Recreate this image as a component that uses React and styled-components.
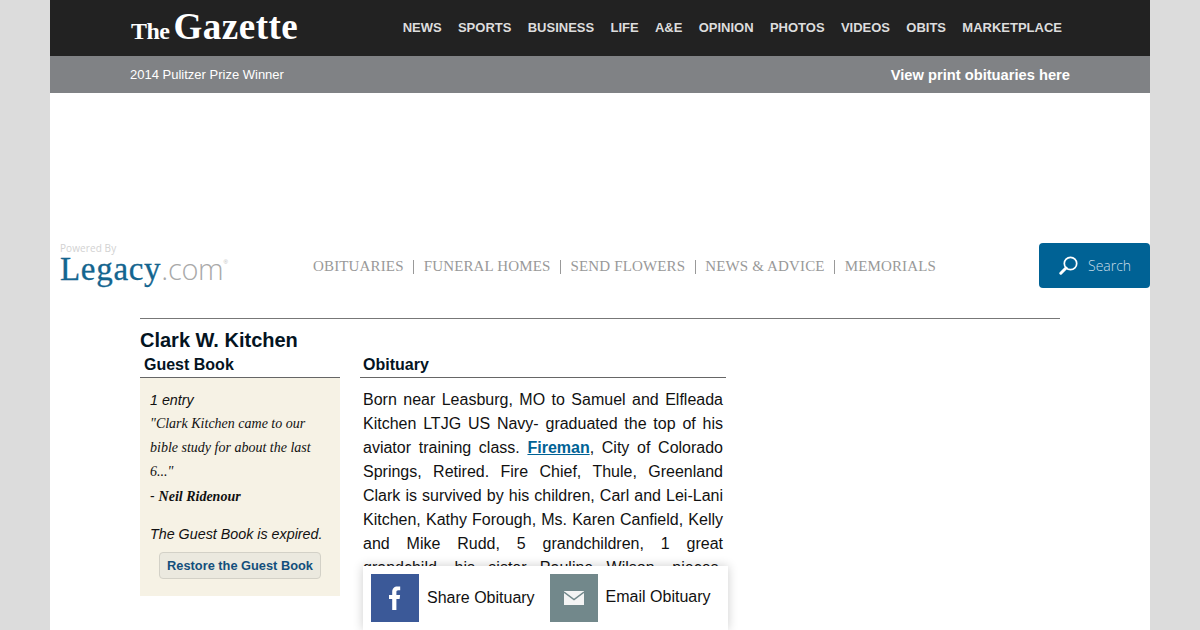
import React from "react";
import styled, { createGlobalStyle } from "styled-components";

const GlobalStyle = createGlobalStyle`
  html, body {
    margin: 0;
    padding: 0;
    height: 630px;
    overflow: hidden;
    background: #dcdcdc;
    font-family: "Liberation Sans", Arial, sans-serif;
  }
`;

const Page = styled.div`
  position: relative;
  width: 1100px;
  height: 630px;
  margin: 0 auto;
  background: #fff;
  overflow: hidden;
`;

const TopBar = styled.div`
  display: flex;
  align-items: center;
  box-sizing: border-box;
  height: 56px;
  padding: 0 88px 2px 81px;
  background: #222;
`;

const Logo = styled.div`
  flex: 1;
  display: flex;
  align-items: baseline;
  gap: 4px;
  color: #fff;
  font-family: "Liberation Serif", serif;
  font-weight: bold;
`;

const LogoThe = styled.span`
  font-size: 24px;
  letter-spacing: -0.5px;
`;

const LogoName = styled.span`
  font-size: 37px;
  line-height: 40px;
  letter-spacing: 0.5px;
`;

const Nav = styled.nav`
  display: flex;
  gap: 16.3px;
`;

const NavLink = styled.a`
  color: #ddd;
  font-size: 13px;
  font-weight: bold;
`;

const SubBar = styled.div`
  display: flex;
  align-items: center;
  justify-content: space-between;
  height: 37px;
  padding: 0 80px;
  background: #808285;
  color: #fff;
`;

const Prize = styled.span`
  font-size: 13px;
`;

const PrintLink = styled.a`
  font-size: 14.7px;
  font-weight: bold;
`;

const AdSpace = styled.div`
  height: 150px;
`;

const LegacyRow = styled.div`
  display: flex;
  align-items: center;
  height: 45px;
`;

const Brand = styled.div`
  width: 263px;
  padding-left: 10px;
  box-sizing: border-box;
  flex: none;
`;

const Powered = styled.div`
  color: #d2d2d2;
  font-family: "Open Sans", sans-serif;
  font-size: 10px;
  line-height: 10px;
  letter-spacing: 0.1px;
`;

const BrandName = styled.div`
  margin: -2px 0 2px;
  font-family: "Liberation Serif", serif;
  font-size: 33px;
  line-height: 36px;
  letter-spacing: 0.7px;
  color: #14658f;
  -webkit-text-stroke: 0.3px #14658f;
`;

const BrandCom = styled.span`
  color: #a9a9a9;
  font-family: "Open Sans", sans-serif;
  font-size: 29px;
  font-weight: 300;
  letter-spacing: -0.3px;
  -webkit-text-stroke: 0;
`;

const BrandMark = styled.sup`
  color: #bbb;
  font-family: "Liberation Sans", sans-serif;
  font-size: 6px;
  line-height: 0;
  vertical-align: 16px;
  -webkit-text-stroke: 0;
`;

const LegacyNav = styled.nav`
  flex: 1;
  display: flex;
  align-items: center;
  gap: 9.5px;
  margin-top: 2px;
  color: #999;
  font-family: "Liberation Serif", serif;
  font-size: 15px;
`;

const LegacyLink = styled.a`
  letter-spacing: 0.15px;
`;

const Divider = styled.span`
  width: 1px;
  height: 14px;
  background: #999;
`;

const SearchButton = styled.button`
  display: flex;
  align-items: center;
  gap: 10px;
  width: 111px;
  height: 45px;
  padding: 0 0 0 20px;
  border: 0;
  border-radius: 4px;
  background: #006295;
  color: #c9dde9;
  font-family: "Open Sans", sans-serif;
  font-size: 14px;
  font-weight: 300;
`;

const Content = styled.main`
  margin: 30px 90px 0;
  border-top: 1px solid #777;
`;

const Name = styled.h1`
  margin: 10px 0 0;
  color: #04141f;
  font-size: 20px;
  line-height: 23px;
`;

const Columns = styled.div`
  display: flex;
  gap: 20px;
  margin-top: 1px;
`;

const GuestColumn = styled.section`
  width: 200px;
  flex: none;
`;

const ObitColumn = styled.section`
  width: 366px;
`;

const ColumnTitle = styled.h2`
  margin: 0;
  padding: 2px 0 2px ${(p) => p.$indent}px;
  border-bottom: 1px solid #666;
  color: #04141f;
  font-size: 16px;
  line-height: 20px;
`;

const GuestPanel = styled.div`
  box-sizing: border-box;
  height: 218px;
  padding: 10px 10px 0;
  background: #f6f2e5;
  color: #111;
`;

const EntryCount = styled.div`
  font-size: 14.3px;
  font-style: italic;
  line-height: 24px;
`;

const Quote = styled.div`
  font-family: "Liberation Serif", serif;
  font-size: 14px;
  font-style: italic;
  line-height: 24px;
`;

const SignerLine = styled.div`
  font-size: 14px;
  line-height: 24px;
`;

const Signer = styled.strong`
  font-family: "Liberation Serif", serif;
  font-style: italic;
`;

const Expired = styled.div`
  margin-top: 13px;
  font-size: 14.3px;
  font-style: italic;
  line-height: 24px;
  white-space: nowrap;
`;

const RestoreButton = styled.a`
  display: block;
  box-sizing: border-box;
  width: 162px;
  height: 27px;
  margin: 6px 0 0 9px;
  border: 1px solid #d3d1c7;
  border-radius: 4px;
  background: #ebe9df;
  color: #134f7c;
  font-size: 12.8px;
  font-weight: bold;
  line-height: 25px;
  text-align: center;
`;

const ObitText = styled.p`
  margin: 10px 3px 0;
  color: #111;
  font-size: 16px;
  line-height: 24px;
  text-align: justify;
`;

const ObitLink = styled.a`
  color: #006295;
  font-weight: bold;
  text-decoration: underline;
`;

const ShareBar = styled.div`
  position: absolute;
  left: 313px;
  top: 566px;
  display: flex;
  align-items: center;
  width: 365px;
  height: 64px;
  padding: 0 8px;
  box-sizing: border-box;
  background: #fff;
  box-shadow: 0 0 10px rgba(0, 0, 0, 0.2);
`;

const ShareIcon = styled.span`
  display: flex;
  align-items: center;
  justify-content: center;
  width: 48px;
  height: 48px;
  flex: none;
  background: ${(p) => p.$color};
`;

const ShareLabel = styled.span`
  margin: ${(p) => p.$nudge}px 15px 0 8px;
  color: #111;
  font-size: 16px;
  white-space: nowrap;
`;

const navItems = ["NEWS", "SPORTS", "BUSINESS", "LIFE", "A&E", "OPINION", "PHOTOS", "VIDEOS", "OBITS", "MARKETPLACE"];
const legacyItems = ["OBITUARIES", "FUNERAL HOMES", "SEND FLOWERS", "NEWS & ADVICE", "MEMORIALS"];

export default function App() {
  return (
    <>
      <GlobalStyle />
      <Page>
        <TopBar>
          <Logo>
            <LogoThe>The</LogoThe>
            <LogoName>Gazette</LogoName>
          </Logo>
          <Nav>
            {navItems.map((item) => (
              <NavLink key={item}>{item}</NavLink>
            ))}
          </Nav>
        </TopBar>
        <SubBar>
          <Prize>2014 Pulitzer Prize Winner</Prize>
          <PrintLink>View print obituaries here</PrintLink>
        </SubBar>
        <AdSpace />
        <LegacyRow>
          <Brand>
            <Powered>Powered By</Powered>
            <BrandName>
              Legacy<BrandCom>.com</BrandCom>
              <BrandMark>®</BrandMark>
            </BrandName>
          </Brand>
          <LegacyNav>
            {legacyItems.map((item, i) => (
              <React.Fragment key={item}>
                {i > 0 && <Divider />}
                <LegacyLink>{item}</LegacyLink>
              </React.Fragment>
            ))}
          </LegacyNav>
          <SearchButton>
            <svg width="19" height="19" viewBox="0 0 19 19" fill="none" stroke="#fff">
              <circle cx="11.5" cy="7.5" r="6.2" strokeWidth="1.7" />
              <path d="M7 12 L1.8 17.2" strokeWidth="3" strokeLinecap="round" />
            </svg>
            Search
          </SearchButton>
        </LegacyRow>
        <Content>
          <Name>Clark W. Kitchen</Name>
          <Columns>
            <GuestColumn>
              <ColumnTitle $indent={4}>Guest Book</ColumnTitle>
              <GuestPanel>
                <EntryCount>1 entry</EntryCount>
                <Quote>"Clark Kitchen came to our bible study for about the last 6..."</Quote>
                <SignerLine>
                  - <Signer>Neil Ridenour</Signer>
                </SignerLine>
                <Expired>The Guest Book is expired.</Expired>
                <RestoreButton>Restore the Guest Book</RestoreButton>
              </GuestPanel>
            </GuestColumn>
            <ObitColumn>
              <ColumnTitle $indent={3}>Obituary</ColumnTitle>
              <ObitText>
                Born near Leasburg, MO to Samuel and Elfleada Kitchen LTJG US Navy- graduated the top of his
                aviator training class. <ObitLink>Fireman</ObitLink>, City of Colorado Springs, Retired. Fire
                Chief, Thule, Greenland Clark is survived by his children, Carl and Lei-Lani Kitchen, Kathy
                Forough, Ms. Karen Canfield, Kelly and Mike Rudd, 5 grandchildren, 1 great grandchild, his
                sister Pauline Wilson, nieces, nephews and friends.
              </ObitText>
            </ObitColumn>
          </Columns>
        </Content>
        <ShareBar>
          <ShareIcon $color="#3b5998">
            <svg width="12" height="24" viewBox="0 0 12 24" fill="#fff">
              <path d="M3.2 24V13H0V9h3.2V6c0-3.6 2-5.6 5.2-5.6 1.2 0 2.3.1 2.8.2v3.7H9.3C7.8 4.3 7.4 5 7.4 6.2V9h3.7l-.5 4H7.4v11z" />
            </svg>
          </ShareIcon>
          <ShareLabel $nudge={0}>Share Obituary</ShareLabel>
          <ShareIcon $color="#72888b">
            <svg width="20" height="14" viewBox="0 0 20 14">
              <rect width="20" height="14" fill="#f4f4f4" />
              <path d="M0 1 L10 8.5 L20 1" fill="none" stroke="#72888b" strokeWidth="1.4" />
            </svg>
          </ShareIcon>
          <ShareLabel $nudge={-2}>Email Obituary</ShareLabel>
        </ShareBar>
      </Page>
    </>
  );
}
